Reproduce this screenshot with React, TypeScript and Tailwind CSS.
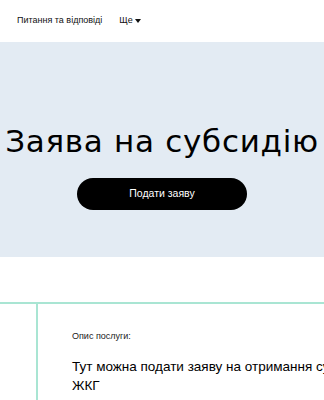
export default function App() {
  return (
    <div className="w-[324px] h-[400px] overflow-hidden bg-white" style={{ fontFamily: "'Liberation Sans', Arial, sans-serif" }}>
      <nav className="h-[42px] flex items-center pl-[17px] gap-[17px] text-[9px] text-[#111]">
        <span>Питання та відповіді</span>
        <span className="flex items-center gap-[2px]">
          Ще
          <svg width="6" height="4" viewBox="0 0 6 4"><path d="M0 0h6L3 4z" fill="#111" /></svg>
        </span>
      </nav>
      <section className="h-[215px] bg-[#e3ebf3] flex flex-col items-center">
        <h1 className="mt-[81px] whitespace-nowrap text-[31px] leading-[36px] tracking-[0.7px] text-black" style={{ fontFamily: "'DejaVu Sans', sans-serif" }}>
          Заява на субсидію
        </h1>
        <button className="mt-[19px] w-[170px] h-[32px] rounded-full bg-black text-white text-[10.5px]">
          Подати заяву
        </button>
      </section>
      <div className="mt-[45px] border-t-2 border-[#a9e5d3] flex">
        <div className="w-[36px] shrink-0" />
        <div className="border-l-2 border-[#a9e5d3] pl-[34px] pt-[26px] h-[120px] whitespace-nowrap">
          <div className="text-[9px] text-[#222]">Опис послуги:</div>
          <div className="mt-[13px] text-[13.5px] leading-[19px] text-black">
            Тут можна подати заяву на отримання субсидії на оплату
            <br />
            ЖКГ
          </div>
        </div>
      </div>
    </div>
  );
}
